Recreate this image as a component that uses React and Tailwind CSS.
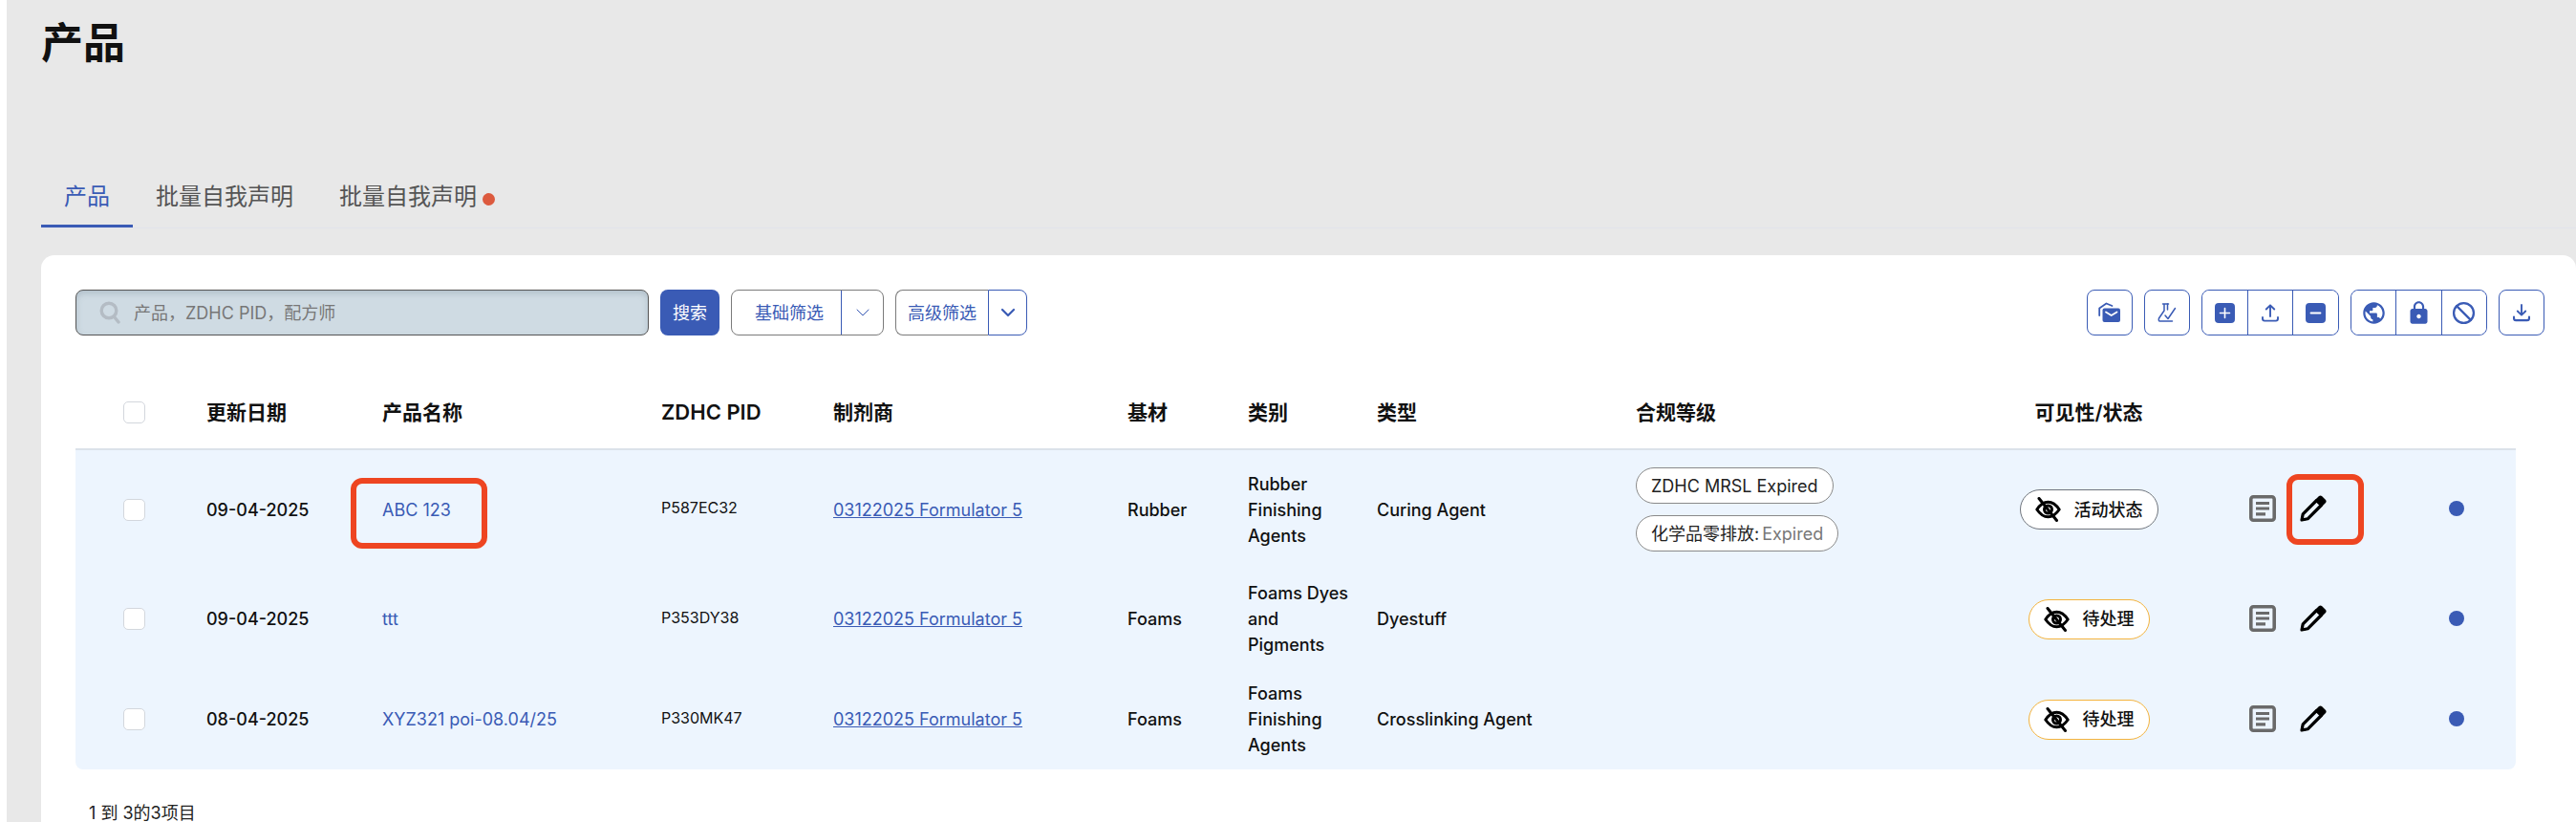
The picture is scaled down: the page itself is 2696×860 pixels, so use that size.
import React from "react";
import { ChevronDown, Ban } from "lucide-react";
import { MdPublic, MdLock } from "react-icons/md";

const FONT = "font-['Inter','Noto_Sans_CJK_SC',sans-serif]";

const Search = () => (
  <svg width="22" height="24" viewBox="0 0 22 24" fill="none" stroke="#b4bcc4" strokeWidth="3.4" strokeLinecap="round">
    <circle cx="10" cy="10" r="7.8" />
    <path d="M15.5 16.5 L20 22" />
  </svg>
);

const MailStack = () => (
  <svg width="24" height="22" viewBox="0 0 24 22" fill="none">
    <path d="M1.2 14 V6.5 L8.5 1.5 L14.5 4" stroke="#3a5bb5" strokeWidth="1.8" strokeLinecap="round" strokeLinejoin="round" />
    <rect x="4.5" y="6.5" width="18.5" height="14.5" rx="2" fill="#3a5bb5" />
    <path d="M8 10.5 L13.7 14 L19.5 10.5" stroke="#fff" strokeWidth="1.8" strokeLinecap="round" strokeLinejoin="round" />
  </svg>
);

const Flask = () => (
  <svg width="20" height="20" viewBox="0 0 20 20" fill="none" stroke="#3a5bb5" strokeWidth="1.5" strokeLinecap="round" strokeLinejoin="round">
    <path d="M5.5 1 H11.5 M7 1 V8 L1.5 16 Q0.8 18.8 2.5 19 H15.5" />
    <path d="M10.5 1 V7" />
    <path d="M8 13 L11 16.5 L18.5 5.5" />
  </svg>
);

const SquarePlus = () => (
  <svg width="21" height="21" viewBox="0 0 21 21" fill="none">
    <rect width="21" height="21" rx="4" fill="#3a5bb5" />
    <path d="M10.5 5.5 V15.5 M5.5 10.5 H15.5" stroke="#fff" strokeWidth="1.6" strokeLinecap="round" />
  </svg>
);

const SquareMinus = () => (
  <svg width="21" height="21" viewBox="0 0 21 21" fill="none">
    <rect width="21" height="21" rx="4" fill="#3a5bb5" />
    <path d="M5.5 10.5 H15.5" stroke="#fff" strokeWidth="1.8" strokeLinecap="round" />
  </svg>
);

const Upload = () => (
  <svg width="18" height="19" viewBox="0 0 18 19" fill="none" stroke="#3a5bb5" strokeWidth="1.9" strokeLinecap="round" strokeLinejoin="round">
    <path d="M9 13 V1.5 M4.8 5.5 L9 1.3 L13.2 5.5" />
    <path d="M1 14 V15.5 Q1 17.6 3 17.6 H15 Q17 17.6 17 15.5 V14" />
  </svg>
);

const Download = () => (
  <svg width="18" height="19" viewBox="0 0 18 19" fill="none" stroke="#3a5bb5" strokeWidth="1.9" strokeLinecap="round" strokeLinejoin="round">
    <path d="M9 1 V11.5 M4.8 7.5 L9 11.7 L13.2 7.5" />
    <path d="M1 13.5 V15 Q1 17.2 3 17.2 H15 Q17 17.2 17 15 V13.5" strokeWidth="2.2" />
  </svg>
);

const EyeOff = () => (
  <svg width="27" height="26" viewBox="0 0 27 26" fill="none" strokeLinecap="round" strokeLinejoin="round">
    <path d="M1.8 13 Q7 5.2 13.5 5.2 Q20 5.2 25.2 13 Q20 20.8 13.5 20.8 Q7 20.8 1.8 13 Z" stroke="#000" strokeWidth="3" />
    <circle cx="13.5" cy="13" r="4" stroke="#000" strokeWidth="3" />
    <path d="M4 1.5 L22.5 24.5" stroke="#000" strokeWidth="3" />
  </svg>
);

const Doc = () => (
  <svg width="28" height="28" viewBox="0 0 28 28" fill="none" stroke="#6a6a6a">
    <rect x="1.8" y="1.8" width="24.4" height="24.4" rx="2.5" strokeWidth="3.6" />
    <path d="M7 8.5 H21 M7 14 H21 M7 19.8 H17" strokeWidth="3.2" />
  </svg>
);

const Pencil = () => (
  <svg width="28" height="28" viewBox="0 0 28 28" fill="none">
    <path d="M2 26 L3.2 19.8 L17.5 5.5 L22.5 10.5 L8.2 24.8 Z" stroke="#000" strokeWidth="3.2" strokeLinejoin="round" />
    <path d="M16.5 4.5 L20 1 Q21.5 -0.2 23 1 L27 5 Q28.2 6.5 27 8 L23.5 11.5 Z" fill="#000" />
    <path d="M0.8 27.2 L1.8 21.5 L6.5 26.2 Z" fill="#000" />
  </svg>
);

const Btn = ({ children, className = "" }) => (
  <div className={`flex h-12 w-12 items-center justify-center bg-white ${className}`}>{children}</div>
);

const rows = [
  {
    date: "09-04-2025", name: "ABC 123", pid: "P587EC32", base: "Rubber", cat: "Rubber Finishing Agents", type: "Curing Agent",
    status: "活动状态", pending: false, badges: true,
  },
  {
    date: "09-04-2025", name: "ttt", pid: "P353DY38", base: "Foams", cat: "Foams Dyes and Pigments", type: "Dyestuff",
    status: "待处理", pending: true,
  },
  {
    date: "08-04-2025", name: "XYZ321 poi-08.04/25", pid: "P330MK47", base: "Foams", cat: "Foams Finishing Agents", type: "Crosslinking Agent",
    status: "待处理", pending: true,
  },
];

const headers = ["更新日期", "产品名称", "ZDHC PID", "制剂商", "基材", "类别", "类型", "合规等级"];

const Check = ({ className = "" }) => (
  <span className={`block h-[23px] w-[23px] rounded-[5px] border border-[#d3d7dd] bg-white ${className}`} />
);

export default function App() {
  return (
    <div className={`flex h-[860px] w-[2696px] overflow-hidden bg-white ${FONT}`}>
      <div className="w-[7px] shrink-0 bg-white" />
      <main className="flex min-w-0 flex-1 flex-col bg-[#e8e8e8] pl-[36px]">
        <h1 className="h-[87px] shrink-0 pt-[15px] text-[44px] font-bold leading-[60px] text-[#111]">产品</h1>

        <nav className="mt-[88px] flex h-[64px] shrink-0 items-start border-b border-[#e1e3eb] text-[24px] leading-[62px]">
          <a className="-mb-px flex h-[63px] w-[96px] justify-center border-b-[3px] border-[#3a5bb5] text-[#3a5bb5]">产品</a>
          <a className="w-[192px] text-center text-[#555]">批量自我声明</a>
          <a className="ml-[24px] flex items-center text-[#555]">
            <span>批量自我声明</span>
            <span className="ml-[6px] mt-[4px] h-[13px] w-[13px] rounded-full bg-[#dc5a3e]" />
          </a>
        </nav>

        <section className="relative mt-[28px] min-h-0 flex-1 rounded-t-[14px] bg-white pl-[36px] pr-[33px] pt-[36px]">
          <div className="flex h-12 items-stretch">
            <div className="flex w-[600px] items-center rounded-[8px] border border-[#555] bg-[#cfdbe3] pl-[24px] text-[18px] text-[#777] shadow-[inset_0_3px_6px_rgba(120,140,155,0.35)]">
              <Search />
              <span className="ml-[14px]">产品，ZDHC PID，配方师</span>
            </div>
            <button className="ml-[12px] w-[62px] rounded-[8px] bg-[#3a5bb5] text-[18px] text-white">搜索</button>
            <div className="ml-[12px] flex w-[160px] rounded-[8px] border border-[#7b7b7b] text-[18px] text-[#3a5bb5]">
              <span className="flex w-[115px] items-center justify-center border-r border-[#3a5bb5] pl-[6px]">基础筛选</span>
              <span className="flex flex-1 items-center justify-center">
                <ChevronDown size={24} strokeWidth={1} color="#3a5bb5" />
              </span>
            </div>
            <div className="relative ml-[12px] flex w-[138px] text-[18px] text-[#3a5bb5]">
              <span className="flex w-[97px] items-center justify-center rounded-l-[8px] border border-r-0 border-[#7b7b7b]">高级筛选</span>
              <span className="flex flex-1 items-center justify-center rounded-r-[8px] border border-[#3a5bb5]">
                <ChevronDown size={24} strokeWidth={2.2} color="#3a5bb5" />
              </span>
            </div>
            <div className="ml-auto flex gap-[12px]">
              <Btn className="rounded-[8px] border border-[#3a5bb5]"><MailStack /></Btn>
              <Btn className="rounded-[8px] border border-[#3a5bb5]"><Flask /></Btn>
              <div className="flex w-[144px] rounded-[8px] border border-[#3a5bb5] [&>div]:h-[46px] [&>div]:w-auto [&>div]:flex-1">
                <Btn className="rounded-l-[8px] border-r border-[#3a5bb5]"><SquarePlus /></Btn>
                <Btn className="border-r border-[#3a5bb5]"><Upload /></Btn>
                <Btn className="rounded-r-[8px]"><SquareMinus /></Btn>
              </div>
              <div className="flex w-[143px] rounded-[8px] border border-[#3a5bb5] [&>div]:h-[46px] [&>div]:w-auto [&>div]:flex-1">
                <Btn className="rounded-l-[8px] border-r border-[#3a5bb5]"><MdPublic size={27} color="#3a5bb5" /></Btn>
                <Btn className="border-r border-[#3a5bb5]"><MdLock size={27} color="#3a5bb5" /></Btn>
                <Btn className="rounded-r-[8px]"><Ban size={25} strokeWidth={2.2} color="#3a5bb5" /></Btn>
              </div>
              <Btn className="rounded-[8px] border border-[#3a5bb5]"><Download /></Btn>
            </div>
          </div>

          <table className="mt-[43px] w-[2554px] table-fixed border-separate border-spacing-0">
            <colgroup>
              <col className="w-[137px]" />
              <col className="w-[184px]" />
              <col className="w-[292px]" />
              <col className="w-[180px]" />
              <col className="w-[308px]" />
              <col className="w-[126px]" />
              <col className="w-[135px]" />
              <col className="w-[271px]" />
              <col className="w-[348px]" />
              <col className="w-[252px]" />
              <col className="w-[218px]" />
              <col className="w-[103px]" />
            </colgroup>
            <thead>
              <tr className="h-[77px] text-[21px] font-semibold text-[#111]">
                <th className="border-b-2 border-[#dbe2ea] pl-[50px] text-left font-semibold"><Check /></th>
                {headers.map((h) => (
                  <th key={h} className={`border-b-2 border-[#dbe2ea] text-left font-semibold ${h === "ZDHC PID" ? "text-[22px]" : ""}`}>{h}</th>
                ))}
                <th className="border-b-2 border-[#dbe2ea] text-center font-semibold">可见性/状态</th>
                <th className="border-b-2 border-[#dbe2ea]" />
                <th className="border-b-2 border-[#dbe2ea]" />
              </tr>
            </thead>
            <tbody className="text-[18px] leading-[27px] text-[#111]">
              {rows.map((r, i) => {
                const last = i === rows.length - 1;
                const td = "bg-[#edf5fe] py-3 align-middle";
                return (
                  <tr key={r.pid}>
                    <td className={`${td} pl-[50px] ${last ? "rounded-bl-[8px]" : ""}`}><Check /></td>
                    <td className={`${td} font-medium`}>{r.date}</td>
                    <td className={`${td} text-[#3a5bb5]`}>{r.name}</td>
                    <td className={`${td} pb-[15px] text-[16px]`}>{r.pid}</td>
                    <td className={td}><a className="text-[#3a5bb5] underline">03122025 Formulator 5</a></td>
                    <td className={`${td} font-medium`}>{r.base}</td>
                    <td className={`${td} pr-[25px] font-medium`}>{r.cat}</td>
                    <td className={`${td} font-medium`}>{r.type}</td>
                    <td className={td}>
                      {r.badges && (
                        <div className="flex flex-col items-start gap-[12px] py-[6px] text-[#222]">
                          <span className="flex h-[38px] items-center rounded-full border border-[#8a8a8a] bg-white px-[15px]">ZDHC MRSL Expired</span>
                          <span className="flex h-[38px] items-center rounded-full border border-[#8a8a8a] bg-white px-[15px]">
                            化学品零排放:<span className="ml-[3px] text-[#777]">Expired</span>
                          </span>
                        </div>
                      )}
                    </td>
                    <td className={td}>
                      <div className="flex justify-center">
                        <span className={`flex h-[42px] items-center gap-[14px] rounded-full border bg-white px-[15px] font-medium ${r.pending ? "border-[#f4b33d]" : "border-[#70757d]"}`}>
                          <EyeOff />
                          <span>{r.status}</span>
                        </span>
                      </div>
                    </td>
                    <td className={td}>
                      <div className="flex items-center gap-[25px] pl-[42px] pb-[2px]">
                        <Doc />
                        <Pencil />
                      </div>
                    </td>
                    <td className={`${td} pl-[33px] ${last ? "rounded-br-[8px]" : ""}`}>
                      <span className="mb-[2px] block h-[16px] w-[16px] rounded-full bg-[#3a5bb5]" />
                    </td>
                  </tr>
                );
              })}
            </tbody>
          </table>

          <p className="ml-[14px] mt-[32px] text-[18px] leading-[27px] text-[#222]">1 到 3的3项目</p>

          <div className="absolute left-[324px] top-[233px] h-[74px] w-[143px] rounded-[12px] border-[6px] border-[#ee4521]" />
          <div className="absolute left-[2350px] top-[229px] h-[74px] w-[81px] rounded-[12px] border-[6px] border-[#ee4521]" />
        </section>
      </main>
    </div>
  );
}
